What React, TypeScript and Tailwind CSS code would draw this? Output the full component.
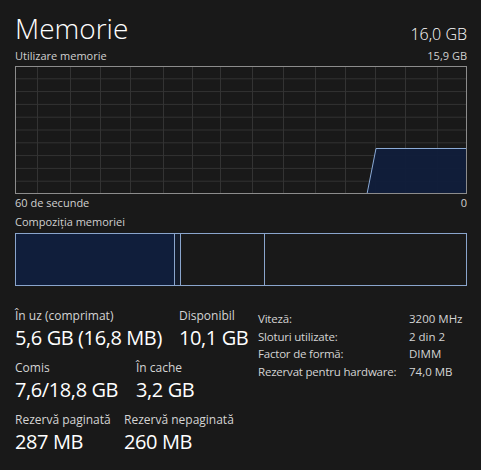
import React from "react";

const font = { fontFamily: '"Open Sans", "Noto Sans", sans-serif' };

// vertical grid line offsets (px from chart left edge)
const vLines = [22, 55, 85, 115, 148, 177, 205, 237, 268, 300, 330, 360, 390, 422];
const hLines = [1, 2, 3, 4, 5, 6, 7, 8, 9].map((i) => i * 12.8);

function UsageChart() {
  const w = 452;
  const h = 128;
  return (
    <svg width={w} height={h} className="block">
      <rect x={0} y={0} width={w} height={h} fill="#191919" />
      {hLines.map((y) => (
        <line key={y} x1={0} x2={w} y1={y} y2={y} stroke="#333333" strokeWidth={1} />
      ))}
      {vLines.map((x) => (
        <line key={x} x1={x + 0.5} x2={x + 0.5} y1={0} y2={h} stroke="#333333" strokeWidth={1} />
      ))}
      <polygon points={`352,${h} 361,82 ${w},82 ${w},${h}`} fill="#101e3b" fillOpacity={0.95} />
      <polyline points={`352,${h} 361,82.5 ${w},82.5`} fill="none" stroke="#8cabd6" strokeWidth={1} />
      <rect x={0.5} y={0.5} width={w - 1} height={h - 1} fill="none" stroke="#8c8c8c" strokeWidth={1} />
    </svg>
  );
}

function Stat({ label, value, w }: { label: string; value: string; w?: string }) {
  return (
    <div className={`flex flex-col ${w ?? ""}`}>
      <span className="text-[12px] leading-[17px] text-[#d4d4d4]">{label}</span>
      <span className="text-[20px] leading-[27px] tracking-[-0.4px] text-white">{value}</span>
    </div>
  );
}

export default function App() {
  const specs: [string, string][] = [
    ["Viteză:", "3200 MHz"],
    ["Sloturi utilizate:", "2 din 2"],
    ["Factor de formă:", "DIMM"],
    ["Rezervat pentru hardware:", "74,0 MB"],
  ];

  return (
    <div className="w-[481px] h-[470px] bg-[#191919] pl-[15px] pr-[14px] pt-[9px] overflow-hidden" style={font}>
      <div className="flex justify-between items-end">
        <span className="text-[28px] leading-[38px] font-light text-white">Memorie</span>
        <span className="text-[16px] leading-[22px] font-light text-white mb-[2px]">16,0 GB</span>
      </div>
      <div className="flex justify-between items-end text-[11px] leading-[16px] text-[#d0d0d0] mt-[1px]">
        <span>Utilizare memorie</span>
        <span>15,9 GB</span>
      </div>
      <div className="mt-[2px]">
        <UsageChart />
      </div>
      <div className="flex justify-between text-[11px] leading-[18px] text-[#d0d0d0]">
        <span>60 de secunde</span>
        <span>0</span>
      </div>
      <div className="text-[11px] leading-[18px] text-[#d0d0d0] mt-[1px]">Compoziția memoriei</div>
      <div className="mt-[2px] h-[53px] w-[452px] flex border border-[#8aa5cc]">
        <div className="w-[159px] bg-[#101e3b] border-r border-[#8aa5cc]" />
        <div className="w-[6px] bg-[#141c2c] border-r border-[#8aa5cc]" />
        <div className="w-[84px] border-r border-[#8aa5cc]" />
        <div className="flex-1" />
      </div>

      <div className="flex mt-[21px]">
        <div className="flex flex-col gap-[8px] w-[243px]">
          <div className="flex">
            <Stat label="În uz (comprimat)" value="5,6 GB (16,8 MB)" w="w-[164px]" />
            <Stat label="Disponibil" value="10,1 GB" />
          </div>
          <div className="flex">
            <Stat label="Comis" value="7,6/18,8 GB" w="w-[121px]" />
            <Stat label="În cache" value="3,2 GB" />
          </div>
          <div className="flex">
            <Stat label="Rezervă paginată" value="287 MB" w="w-[109px]" />
            <Stat label="Rezervă nepaginată" value="260 MB" />
          </div>
        </div>
        <div className="flex flex-col mt-[3px]">
          {specs.map(([k, v]) => (
            <div key={k} className="flex text-[11.5px] leading-[17.7px] text-[#d4d4d4]">
              <span className="w-[151px] tracking-[-0.2px]">{k}</span>
              <span>{v}</span>
            </div>
          ))}
        </div>
      </div>
    </div>
  );
}
